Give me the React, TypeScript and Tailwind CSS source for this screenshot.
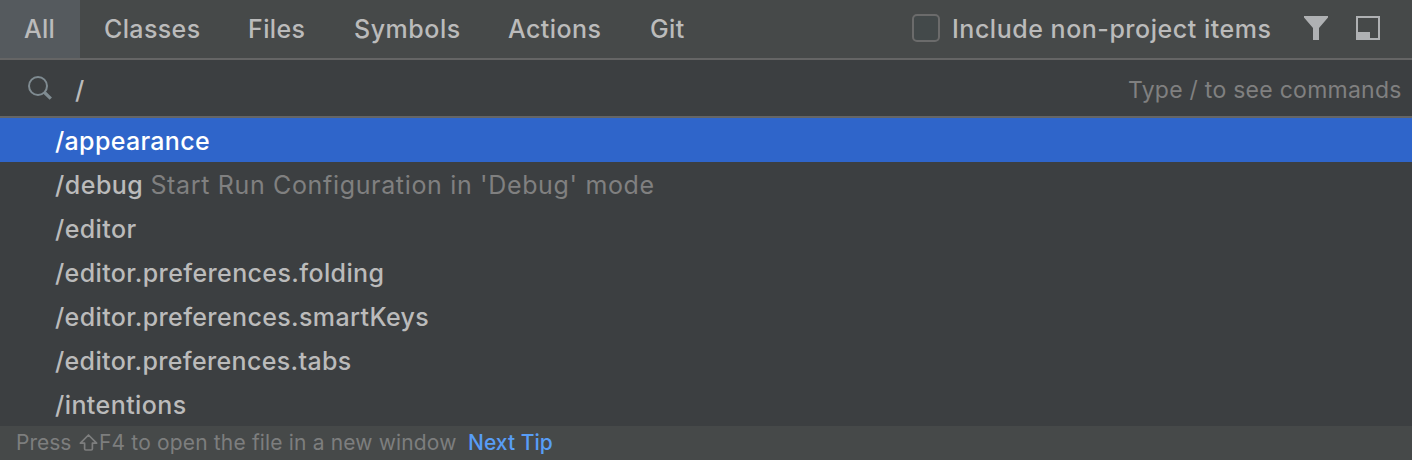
const tabs = [
  { label: 'All', width: 'w-[80px]', spacing: 'tracking-[0.3px]' },
  { label: 'Classes', width: 'w-[144px]', spacing: 'tracking-[0.37px]' },
  { label: 'Files', width: 'w-[106px]', spacing: 'tracking-[0.4px]' },
  { label: 'Symbols', width: 'w-[154px]', spacing: 'tracking-[0.53px]' },
  { label: 'Actions', width: 'w-[142px]', spacing: 'tracking-[0.43px]' },
  { label: 'Git', width: 'w-[84px]', spacing: 'tracking-[0.4px]' },
];

const commands = [
  { name: '/appearance', hint: '', spacing: 'tracking-[0.33px]' },
  { name: '/debug', hint: "Start Run Configuration in 'Debug' mode", spacing: 'tracking-[0.5px]' },
  { name: '/editor', hint: '', spacing: 'tracking-[0.4px]' },
  { name: '/editor.preferences.folding', hint: '', spacing: 'tracking-[0.38px]' },
  { name: '/editor.preferences.smartKeys', hint: '', spacing: 'tracking-[0.37px]' },
  { name: '/editor.preferences.tabs', hint: '', spacing: 'tracking-[0.34px]' },
  { name: '/intentions', hint: '', spacing: 'tracking-[0.43px]' },
];

function SearchIcon() {
  return (
    <svg width="24" height="24" viewBox="0 0 24 24" fill="none" stroke="#7f8b91" className="shrink-0">
      <circle cx="10" cy="10" r="9" strokeWidth="2" />
      <path d="M16 16 L22.8 22.6" strokeWidth="3.2" />
    </svg>
  );
}

function FilterIcon() {
  return (
    <svg width="24" height="24" viewBox="0 0 24 24" fill="#afb1b3" className="shrink-0">
      <path d="M0 0H24V1.5L15 12V24H9V12L0 1.5Z" />
    </svg>
  );
}

function ToolWindowIcon() {
  return (
    <svg width="24" height="24" viewBox="0 0 24 24" fill="#afb1b3" className="shrink-0">
      <path fillRule="evenodd" d="M0 0H24V24H0ZM2 2V16H14V22H22V2Z" />
    </svg>
  );
}

function ShiftIcon() {
  return (
    <svg width="19" height="17" viewBox="0 0 19 17" fill="none" stroke="#7d7e7e" strokeWidth="1.7" strokeLinejoin="round" className="-mt-0.5 shrink-0">
      <path d="M9.5 1 L17.6 9.2 H13.4 V14.8 Q13.4 16 12.2 16 H6.8 Q5.6 16 5.6 14.8 V9.2 H1.4 Z" />
    </svg>
  );
}

export default function App() {
  return (
    <div className="flex h-[460px] w-[1412px] flex-col overflow-hidden bg-[#3c3f41] font-['Inter',sans-serif] text-[25px] leading-[30px] font-medium whitespace-nowrap text-[#bbbbbb]">
      <header className="flex h-[60px] shrink-0 border-b-2 border-[#656565] bg-[#464949]">
        <nav className="flex">
          {tabs.map((tab, i) => (
            <button
              key={tab.label}
              className={`flex items-center pl-6 ${tab.width} ${tab.spacing} ${i === 0 ? 'bg-[#555a5e]' : ''}`}
            >
              {tab.label}
            </button>
          ))}
        </nav>
        <div className="ml-auto flex items-center pr-8">
          <label className="flex items-center">
            <span className="mr-3 -mt-0.5 size-7 rounded-[5px] border-2 border-[#6b6b6b] bg-[#43494a]" />
            <span className="w-[352px] tracking-[0.52px]">Include non-project items</span>
          </label>
          <div className="-mt-0.5 flex gap-7">
            <FilterIcon />
            <ToolWindowIcon />
          </div>
        </div>
      </header>

      <div className="flex h-[58px] shrink-0 items-center border-b-2 border-[#656565] pl-7">
        <SearchIcon />
        <span className="pt-1 pl-[23px]">/</span>
        <span className="ml-auto w-[284px] pt-[3px] text-[23px] font-normal tracking-[0.26px] text-[#808080]">
          Type / to see commands
        </span>
      </div>

      <ul className="shrink-0">
        {commands.map((command, i) => (
          <li
            key={command.name}
            className={`flex h-11 items-center pt-0.5 pl-[55px] ${i === 0 ? 'bg-[#2f65ca] text-white' : ''}`}
          >
            <span className={command.spacing}>{command.name}</span>
            {command.hint && (
              <span className="pl-[7px] font-normal tracking-[0.66px] text-[#808080]">{command.hint}</span>
            )}
          </li>
        ))}
      </ul>

      <footer className="flex h-[34px] shrink-0 items-center bg-[#464949] pl-4 text-[21px] leading-6 font-normal text-[#7d7e7e]">
        <span className="w-[63px]">Press</span>
        <ShiftIcon />
        <span className="w-[370px] pl-px tracking-[0.16px]">F4 to open the file in a new window</span>
        <a className="font-medium tracking-[0.03px] text-[#589df6]">Next Tip</a>
      </footer>
    </div>
  );
}
